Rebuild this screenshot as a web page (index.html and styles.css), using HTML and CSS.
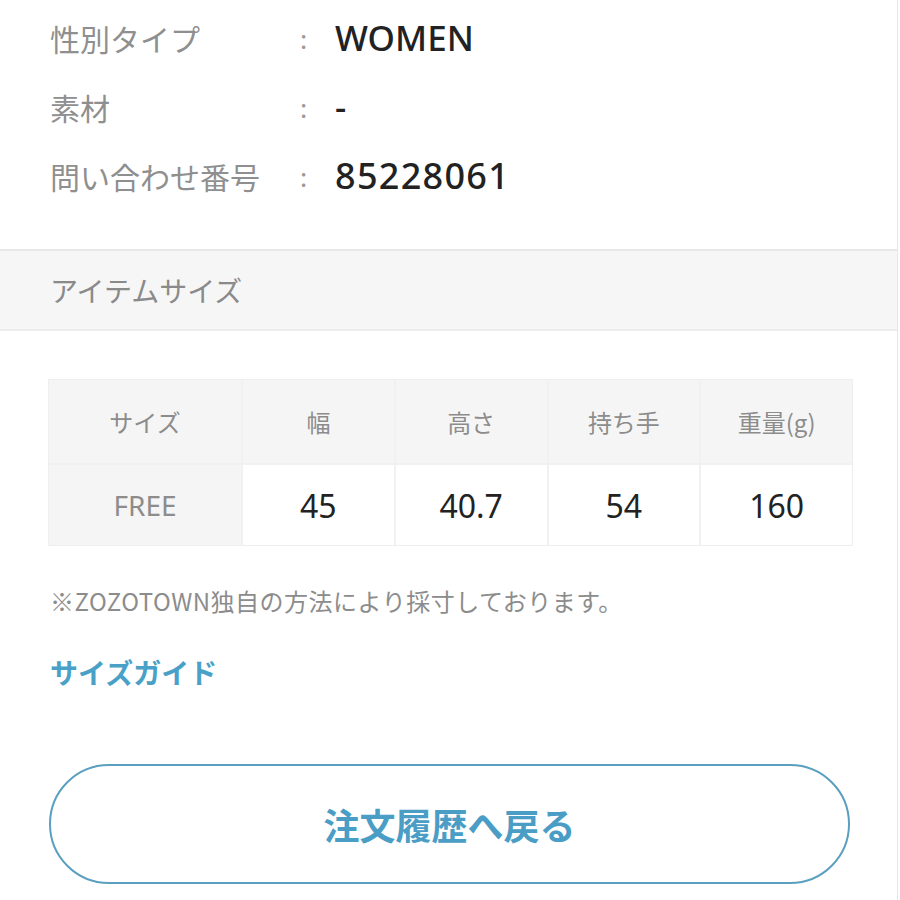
FILE: index.html
```html
<!DOCTYPE html>
<html lang="ja">
<head>
<meta charset="utf-8">
<link rel="stylesheet" href="styles.css">
</head>
<body>
<div class="page">
  <dl class="spec">
    <div class="spec-row"><dt>性別タイプ</dt><dd class="colon">:</dd><dd class="val">WOMEN</dd></div>
    <div class="spec-row"><dt>素材</dt><dd class="colon">:</dd><dd class="val">-</dd></div>
    <div class="spec-row"><dt>問い合わせ番号</dt><dd class="colon">:</dd><dd class="val num">85228061</dd></div>
  </dl>
  <div class="band">アイテムサイズ</div>
  <div class="size-table">
    <div class="th">サイズ</div>
    <div class="th">幅</div>
    <div class="th">高さ</div>
    <div class="th">持ち手</div>
    <div class="th">重量(g)</div>
    <div class="td first">FREE</div>
    <div class="td">45</div>
    <div class="td">40.7</div>
    <div class="td">54</div>
    <div class="td">160</div>
  </div>
  <p class="note">※ZOZOTOWN独自の方法により採寸しております。</p>
  <a class="guide">サイズガイド</a>
  <div class="btn-wrap"><button class="back">注文履歴へ戻る</button></div>
</div>
</body>
</html>
```
FILE: styles.css
```css
html, body { margin: 0; padding: 0; background: #fff; }
body { font-family: "Noto Sans CJK JP", "Noto Sans", sans-serif; }
.page {
  width: 897px;
  height: 900px;
  border-right: 1px solid #e6e6e6;
  overflow: hidden;
}
.spec { margin: 0; padding: 3px 0 38px 50px; }
.spec-row { display: flex; align-items: center; height: 70px; line-height: 40px; }
.spec-row:nth-child(n+2) { margin-top: -1px; }
.spec dt { width: 250px; font-size: 30px; color: #8f8f8f; }
.spec dd { margin: 0; }
.spec .colon { width: 35px; font-size: 26px; color: #9a9a9a; }
.spec .val { font-size: 35px; color: #222; font-family: "Noto Sans", sans-serif; font-weight: 500; }
.spec .val.num { font-size: 36px; letter-spacing: 1.3px; }
.band {
  height: 78px;
  background: #f6f6f6;
  border-top: 2px solid #e8e8e8;
  border-bottom: 2px solid #ececec;
  display: flex;
  align-items: center;
  padding-left: 50px;
  font-size: 28px;
  color: #8a8a8a;
}
.size-table {
  margin: 48px 0 0 48px;
  width: 803px;
  display: grid;
  grid-template-columns: 192px repeat(4, 1fr);
  grid-template-rows: 83px 80px;
  gap: 2px;
  background: #f1f1f1;
  border: 1px solid #eeeeee;
}
.th, .td { display: flex; align-items: center; justify-content: center; }
.th { background: #f5f5f5; color: #8c8c8c; font-size: 24px; }
.td { background: #fff; color: #222; font-size: 32px; font-family: "Noto Sans", sans-serif; }
.td.first { background: #f5f5f5; color: #8c8c8c; font-size: 28px; }
.note { margin: 39px 0 0 50px; font-size: 24px; color: #8c8c8c; line-height: 32px; letter-spacing: 0.5px; }
.guide { display: block; margin: 37px 0 0 50px; font-size: 28px; font-weight: bold; color: #4aa1c7; line-height: 36px; }
.btn-wrap { padding: 74px 47px 0 49px; }
.back {
  display: block;
  width: 100%;
  height: 120px;
  border: 2px solid #5b9fc0;
  border-radius: 60px;
  background: #fff;
  font-family: "Noto Sans CJK JP", sans-serif;
  font-size: 36px;
  font-weight: bold;
  color: #4a9dc5;
}
```
